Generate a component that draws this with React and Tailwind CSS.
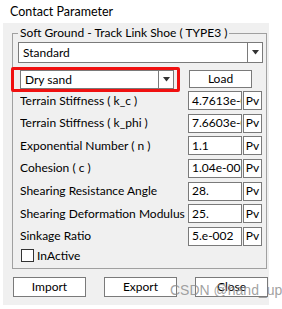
const ROWS = [
  { label: 'Terrain Stiffness ( k_c )', value: '4.7613e-0' },
  { label: 'Terrain Stiffness ( k_phi )', value: '7.6603e-0' },
  { label: 'Exponential Number ( n )', value: '1.1' },
  { label: 'Cohesion ( c )', value: '1.04e-003' },
  { label: 'Shearing Resistance Angle', value: '28.' },
  { label: 'Shearing Deformation Modulus', value: '25.' },
  { label: 'Sinkage Ratio', value: '5.e-002' },
]

function Arrow() {
  return (
    <svg width="9" height="5" viewBox="0 0 9 5">
      <path d="M1 0 H8 L4.5 4.5 Z" fill="#333" />
    </svg>
  )
}

function Combo({ text, className }) {
  return (
    <div className={`flex bg-white border border-[#7a7a7a] ${className}`}>
      <div className="flex-1 flex items-center pl-[4px]">{text}</div>
      <div className="w-[15px] border-l border-[#7a7a7a] flex items-center justify-center">
        <Arrow />
      </div>
    </div>
  )
}

export default function App() {
  return (
    <div
      className="relative w-[282px] h-[309px] bg-white text-[12px] text-black overflow-hidden"
      style={{ fontFamily: 'Lato, "Noto Sans", sans-serif' }}
    >
      <div className="h-[23px] pl-[10px] pt-[3px] text-[12.5px] leading-[18px]">Contact Parameter</div>

      <div className="ml-[3px] w-[266px] h-[282px] bg-[#f0f0f0] pt-[2px]">
        <fieldset className="ml-[9px] w-[255px] h-[244px] border border-[#a0a0a0] leading-[16px]">
          <legend className="ml-[5px] px-[2px]">Soft Ground - Track Link Shoe ( TYPE3 )</legend>

          <Combo text="Standard" className="ml-[5px] mr-[3px] h-[21px] mt-[1px]" />

          <div className="relative flex items-start mt-[7px] ml-[7px] h-[19px]">
            <Combo text="Dry sand" className="w-[154px] h-[19px]" />
            <div className="ml-[15px] w-[63px] h-[18px] bg-white border border-[#7a7a7a] flex items-center justify-center">
              Load
            </div>
            <div className="absolute -left-[9px] -top-[3px] w-[169px] h-[25px] border-[3px] border-[#f01010] rounded-[2px]" />
          </div>

          <div className="mt-[2px] ml-[7px] flex flex-col gap-[3.67px]">
            {ROWS.map((r) => (
              <div key={r.label} className="flex items-center h-[19px]">
                <div className="w-[168px] whitespace-nowrap overflow-hidden">{r.label}</div>
                <div className="w-[54px] h-[19px] bg-white border border-[#7a7a7a] pl-[3px] flex items-center overflow-hidden whitespace-nowrap">
                  {r.value}
                </div>
                <div className="ml-[1px] w-[19px] h-[19px] bg-white border border-[#7a7a7a] flex items-center justify-center">
                  Pv
                </div>
              </div>
            ))}
          </div>

          <div className="flex items-center mt-[3px] ml-[8px] h-[14px]">
            <div className="w-[13px] h-[13px] bg-white border border-[#333]" />
            <span className="ml-[3px]">InActive</span>
          </div>
        </fieldset>

        <div className="flex mt-[8px] ml-[10px] h-[20px]">
          <div className="w-[73px] h-[20px] bg-white border border-[#7a7a7a] flex items-center justify-center">Import</div>
          <div className="ml-[18px] w-[73px] h-[20px] bg-white border border-[#7a7a7a] flex items-center justify-center">Export</div>
          <div className="ml-[18px] w-[73px] h-[20px] bg-white border border-[#7a7a7a] flex items-center justify-center">Close</div>
        </div>
      </div>

      <div
        className="absolute left-[170px] top-[281px] text-[14px] leading-[18px] text-[#8a8a8a]/80 whitespace-nowrap"
        style={{ fontFamily: '"Liberation Sans", sans-serif' }}
      >
        CSDN @hand_up
      </div>
    </div>
  )
}
